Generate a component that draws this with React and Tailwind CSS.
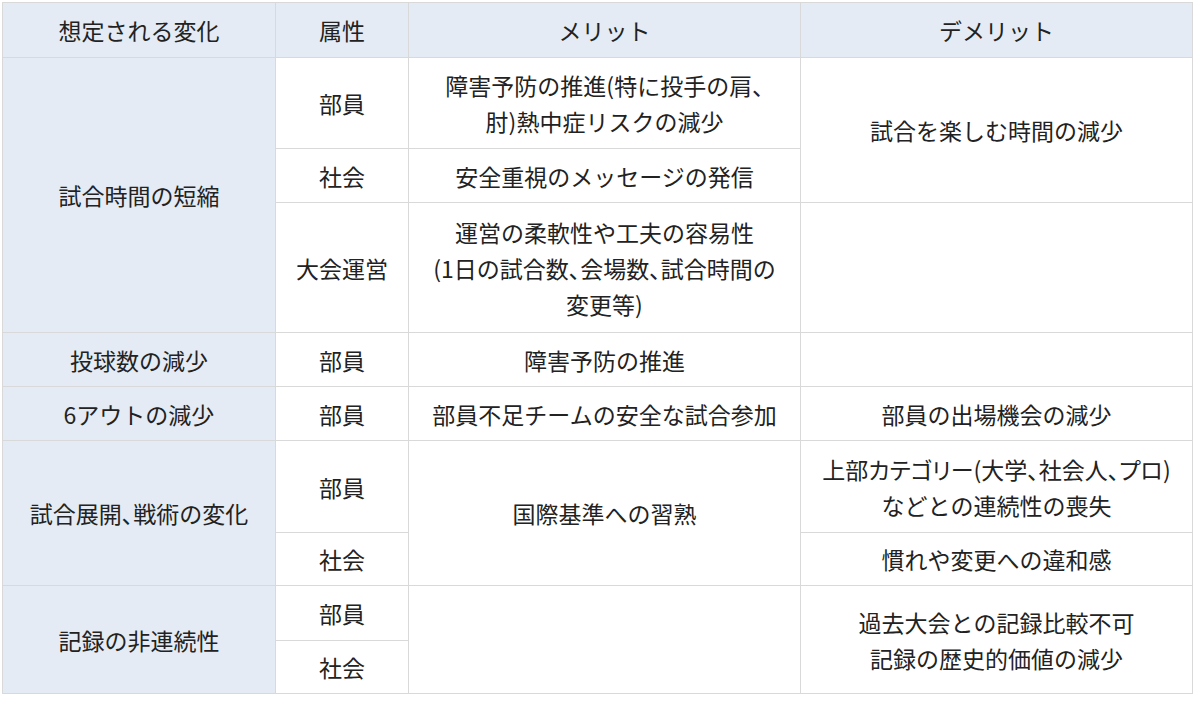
export default function App() {
    const td = "border border-[#d9d9d9] text-center align-middle px-2 leading-[36px]";
    const head = "bg-[#e4ebf4]";
    // proportional punctuation, so 、 and ( ) sit tight as in the original
    const palt = "[font-feature-settings:'palt']";

    return (
        <div className="bg-white w-[1200px] h-[707px] pt-[2px] pl-[2px]" style={{ fontFamily: '"Noto Sans CJK JP", "Noto Sans", sans-serif' }}>
            <table className="border-collapse table-fixed text-[23px] text-[#222]">
                <colgroup>
                    <col className="w-[273px]" />
                    <col className="w-[133px]" />
                    <col className="w-[392px]" />
                    <col className="w-[392px]" />
                </colgroup>
                <tbody>
                    <tr className="h-[55px]">
                        <td className={`${td} ${head}`}>想定される変化</td>
                        <td className={`${td} ${head}`}>属性</td>
                        <td className={`${td} ${head}`}>メリット</td>
                        <td className={`${td} ${head}`}>デメリット</td>
                    </tr>
                    <tr className="h-[91px]">
                        <td rowSpan={3} className={`${td} ${head}`}>試合時間の短縮</td>
                        <td className={td}>部員</td>
                        <td className={td}>障害予防の推進<span className={palt}>(</span>特に投手の肩<span className={palt}>、</span><br />肘<span className={palt}>)</span>熱中症リスクの減少</td>
                        <td rowSpan={2} className={td}>試合を楽しむ時間の減少</td>
                    </tr>
                    <tr className="h-[54px]">
                        <td className={td}>社会</td>
                        <td className={td}>安全重視のメッセージの発信</td>
                    </tr>
                    <tr className="h-[130px]">
                        <td className={td}>大会運営</td>
                        <td className={td}>運営の柔軟性や工夫の容易性<br /><span className={palt}>(</span>1日の試合数<span className={palt}>、</span>会場数<span className={palt}>、</span>試合時間の<br />変更等<span className={palt}>)</span></td>
                        <td className={td}></td>
                    </tr>
                    <tr className="h-[54px]">
                        <td className={`${td} ${head}`}>投球数の減少</td>
                        <td className={td}>部員</td>
                        <td className={td}>障害予防の推進</td>
                        <td className={td}></td>
                    </tr>
                    <tr className="h-[54px]">
                        <td className={`${td} ${head}`}>6アウトの減少</td>
                        <td className={td}>部員</td>
                        <td className={td}>部員不足チームの安全な試合参加</td>
                        <td className={td}>部員の出場機会の減少</td>
                    </tr>
                    <tr className="h-[92px]">
                        <td rowSpan={2} className={`${td} ${head}`}>試合展開<span className={palt}>、</span>戦術の変化</td>
                        <td className={td}>部員</td>
                        <td rowSpan={2} className={td}>国際基準への習熟</td>
                        <td className={`${td} whitespace-nowrap px-0`}>
                            <span className={palt}>上部カテゴリー(大学、社会人、プロ)</span><br />などとの連続性の喪失
                        </td>
                    </tr>
                    <tr className="h-[53px]">
                        <td className={td}>社会</td>
                        <td className={td}>慣れや変更への違和感</td>
                    </tr>
                    <tr className="h-[55px]">
                        <td rowSpan={2} className={`${td} ${head}`}>記録の非連続性</td>
                        <td className={td}>部員</td>
                        <td rowSpan={2} className={td}></td>
                        <td rowSpan={2} className={td}>過去大会との記録比較不可<br />記録の歴史的価値の減少</td>
                    </tr>
                    <tr className="h-[53px]">
                        <td className={td}>社会</td>
                    </tr>
                </tbody>
            </table>
        </div>
    );
}
